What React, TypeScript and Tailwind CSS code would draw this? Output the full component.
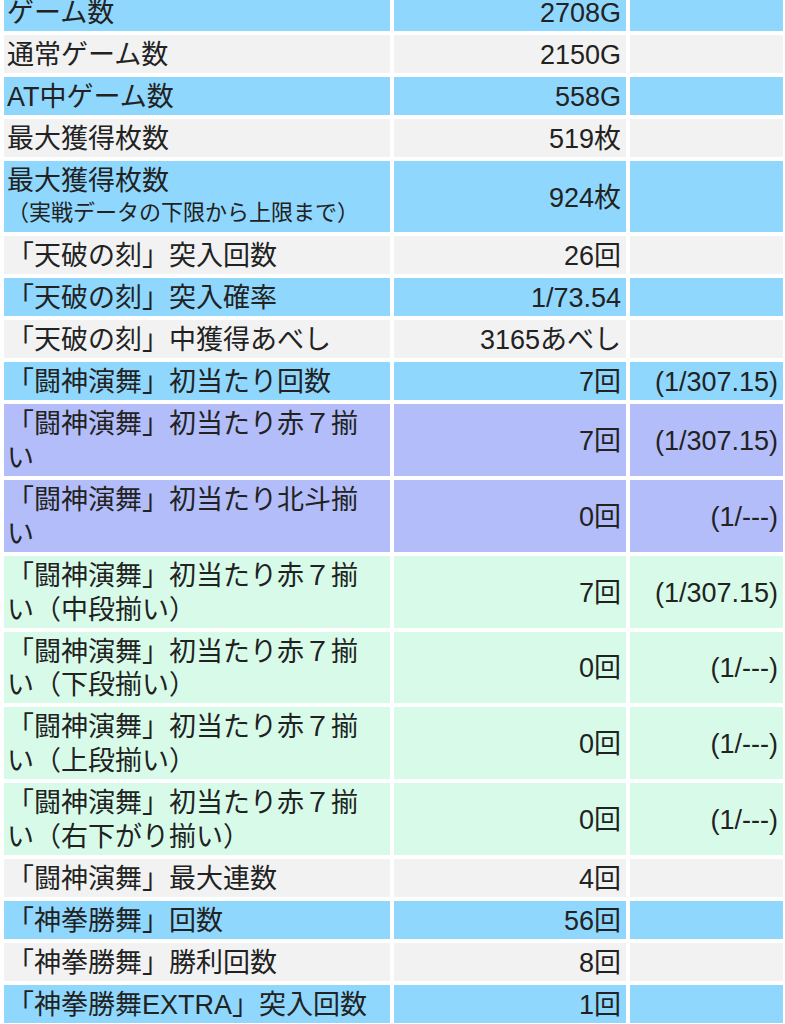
const BLUE = "bg-[#8fd7fd]";
const GRAY = "bg-[#f2f2f2]";
const LAVENDER = "bg-[#b3bdf9]";
const MINT = "bg-[#d8fbe9]";

type Row = {
  label: React.ReactNode;
  value: string;
  rate?: string;
  bg: string;
};

const rows: Row[] = [
  { label: "ゲーム数", value: "2708G", bg: BLUE },
  { label: "通常ゲーム数", value: "2150G", bg: GRAY },
  { label: "AT中ゲーム数", value: "558G", bg: BLUE },
  { label: "最大獲得枚数", value: "519枚", bg: GRAY },
  {
    label: (
      <>
        最大獲得枚数
        <br />
        <span className="text-[22px] leading-[28px] align-top">（実戦データの下限から上限まで）</span>
      </>
    ),
    value: "924枚",
    bg: BLUE,
  },
  { label: "「天破の刻」突入回数", value: "26回", bg: GRAY },
  { label: "「天破の刻」突入確率", value: "1/73.54", bg: BLUE },
  { label: "「天破の刻」中獲得あべし", value: "3165あべし", bg: GRAY },
  { label: "「闘神演舞」初当たり回数", value: "7回", rate: "(1/307.15)", bg: BLUE },
  { label: "「闘神演舞」初当たり赤７揃い", value: "7回", rate: "(1/307.15)", bg: LAVENDER },
  { label: "「闘神演舞」初当たり北斗揃い", value: "0回", rate: "(1/---)", bg: LAVENDER },
  { label: "「闘神演舞」初当たり赤７揃い（中段揃い）", value: "7回", rate: "(1/307.15)", bg: MINT },
  { label: "「闘神演舞」初当たり赤７揃い（下段揃い）", value: "0回", rate: "(1/---)", bg: MINT },
  { label: "「闘神演舞」初当たり赤７揃い（上段揃い）", value: "0回", rate: "(1/---)", bg: MINT },
  { label: "「闘神演舞」初当たり赤７揃い（右下がり揃い）", value: "0回", rate: "(1/---)", bg: MINT },
  { label: "「闘神演舞」最大連数", value: "4回", bg: GRAY },
  { label: "「神拳勝舞」回数", value: "56回", bg: BLUE },
  { label: "「神拳勝舞」勝利回数", value: "8回", bg: GRAY },
  { label: "「神拳勝舞EXTRA」突入回数", value: "1回", bg: BLUE },
];

export default function App() {
  return (
    <div className="min-h-screen bg-white overflow-hidden font-['Liberation_Sans','Noto_Sans_CJK_JP',sans-serif] text-[27px] text-[#222]">
      <div className="grid grid-cols-[386px_232px_153px] gap-[4px] pl-[4px] -mt-[7px]">
        {rows.map((row, i) => (
          <div key={i} className="contents">
            <div className={`${row.bg} pl-[3px] pr-[13px] pt-[4px] leading-[33.9px]`}>
              {row.label}
            </div>
            <div className={`${row.bg} flex items-center justify-end pr-[5px] pt-[4px] leading-[33.9px]`}>
              {row.value}
            </div>
            <div className={`${row.bg} flex items-center justify-end pr-[5px] pt-[4px] leading-[33.9px]`}>
              {row.rate}
            </div>
          </div>
        ))}
      </div>
    </div>
  );
}
